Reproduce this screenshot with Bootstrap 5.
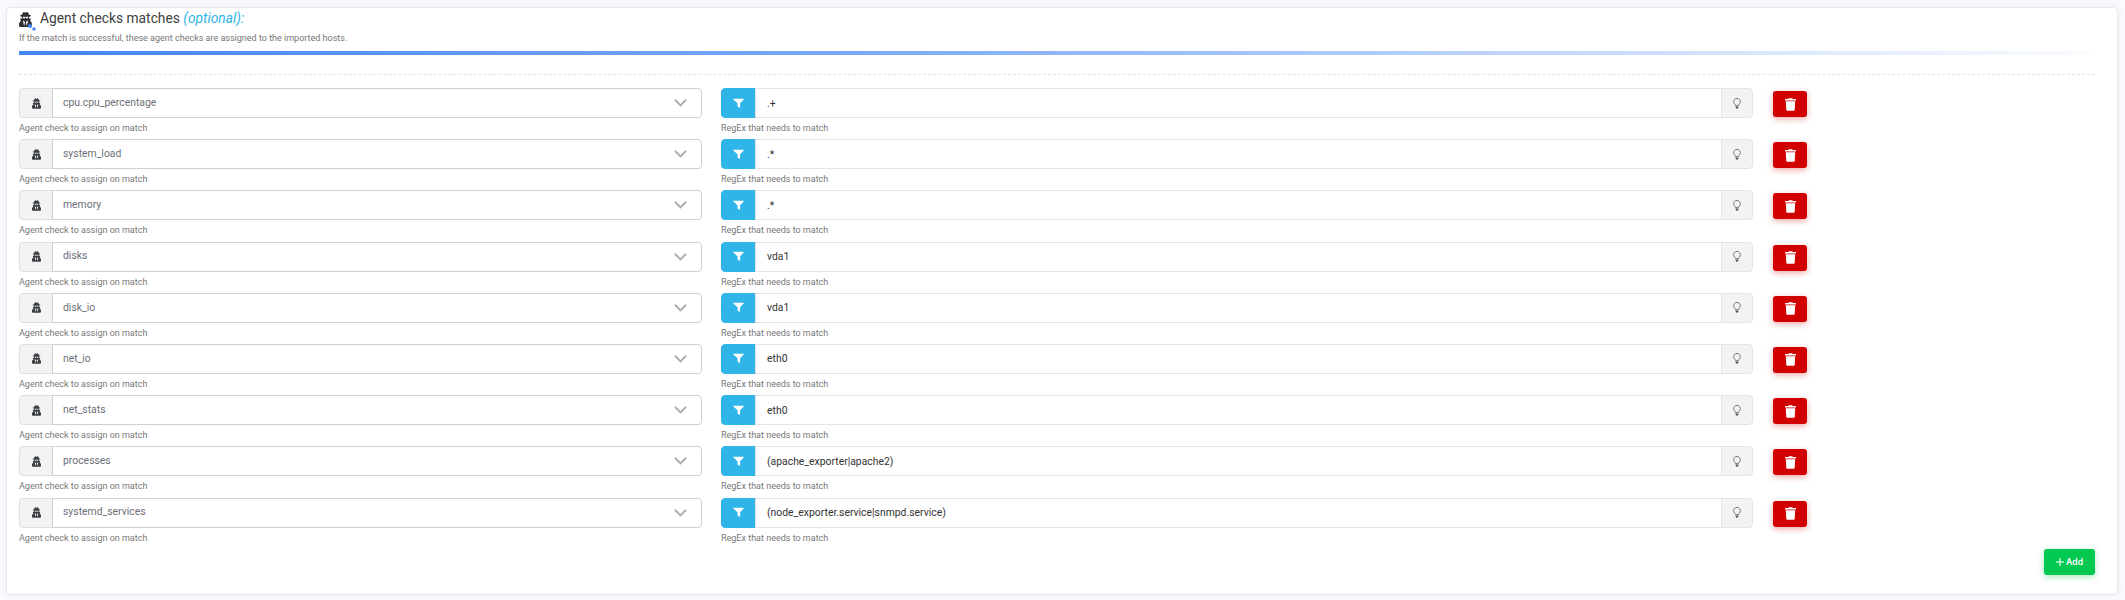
<!DOCTYPE html>
<html lang="en">
<head>
    <meta charset="UTF-8">
    <meta name="viewport" content="width=device-width, initial-scale=1.0">
    <title>Agent checks matches</title>
    <link href="https://cdn.jsdelivr.net/npm/bootstrap@5.3.3/dist/css/bootstrap.min.css" rel="stylesheet">
    <style>
        body { background: #fafbfe; font-family: Roboto, "Liberation Sans", sans-serif; font-size: 10.4px; color: #4d4d4f; }
        .page-wrap { padding: 7px 7px 5px 6px; }
        .main-card { height: 588px; border: 1px solid #e6e8ee; border-radius: 5px; box-shadow: 0 0 10px rgba(90, 100, 130, .10); padding: 0 12px; position: relative; }
        .title-row { height: 22px; }
        .title-icon { position: relative; width: 14px; height: 15px; margin-right: 7px; }
        .title-icon svg { display: block; }
        .title-text { font-size: 13.8px; line-height: 1; color: #404040; }
        .title-text em { color: #2fb5e8; }
        .title-sub { font-size: 9px; color: #777; line-height: 14px; margin-top: 1px; }
        .grad-bar { height: 4px; margin-top: 6px; margin-right: 10px; background: linear-gradient(to right, #4285f4 0%, #7aa9f7 40%, #fbfcff 100%); }
        .dash-line { border-top: 1px dashed #e3e3e3; margin: 19px 10px 13px 0; }
        .match-row { height: 51.2px; }
        .col-check { width: 683px; margin-right: 19px; }
        .col-regex { width: 1032px; margin-right: 20px; }
        .match-row .input-group-text { width: 34px; padding: 0; justify-content: center; background: #f3f3f3; border-color: #e0e0e0; border-radius: 4px 0 0 4px; }
        .match-row .form-select, .match-row .form-control { height: 30px; min-height: 0; font-size: 10.4px; line-height: 1.2; box-shadow: none; }
        .match-row .form-select { padding: 0 30px 0 10px; color: #6c7077; border: 1px solid #ccd0d6; border-radius: 4px; background-size: 13px 8px; background-position: right 14px center; background-image: url("data:image/svg+xml,%3csvg xmlns='http://www.w3.org/2000/svg' viewBox='0 0 16 10'%3e%3cpath fill='none' stroke='%23a9aeb5' stroke-width='2.4' d='M1 1l7 7 7-7'/%3e%3c/svg%3e"); }
        .match-row .form-control { padding: 0 11px; color: #333; border-color: #e4e4e4; }
        .match-row .filter-addon { width: 35px; background: #2fb5e8; border-color: #2fb5e8; }
        .match-row .bulb-addon { width: 32px; border-radius: 0 4px 4px 0; border-color: #e4e4e4; }
        .hint-text { font-size: 9px; line-height: 14px; color: #777; margin-top: 3px; }
        .del-btn { width: 34px; height: 26px; padding: 0; margin-top: 3px; background: #d10000; border: 0; border-radius: 3px; box-shadow: 0 2px 6px rgba(209, 0, 0, .35); }
        .add-btn { position: absolute; right: 22px; bottom: 19px; width: 51px; height: 26px; padding: 0; background: #00c851; border: 0; border-radius: 3px; color: #fff; font-size: 9.5px; font-weight: 500; box-shadow: 0 2px 6px rgba(0, 200, 81, .35); }
        .add-plus { margin-right: 2px; }
    </style>
</head>
<body>
    <svg width="0" height="0" class="d-block" style="position:absolute">
        <symbol id="ico-agent" viewBox="0 0 448 512"><path d="M383.9 308.3l23.9-62.6c4-10.5-3.7-21.7-15-21.7h-58.5c11-18.9 17.8-40.6 17.8-64v-.3c39.2-7.8 64-19.1 64-31.7 0-13.3-27.3-25.1-70.1-33-9.2-32.8-27-65.8-40.6-82.8-9.5-11.9-25.9-15.6-39.5-8.8l-27.6 13.8c-9 4.5-19.6 4.5-28.6 0L182.1 3.4c-13.6-6.8-30-3.1-39.5 8.8-13.5 17-31.4 50-40.6 82.8-42.7 7.9-70 19.7-70 33 0 12.6 24.8 23.9 64 31.7v.3c0 23.4 6.8 45.1 17.8 64H56.3c-11.5 0-19.2 11.7-14.7 22.3l25.8 60.2C27.3 329.8 0 372.7 0 422.4v44.8C0 491.9 20.1 512 44.8 512h358.4c24.7 0 44.8-20.1 44.8-44.8v-44.8c0-48.4-25.8-90.4-64.1-114.1zM176 480l-41.6-192 49.6 32 24 40-32 120zm96 0l-32-120 24-40 49.6-32L272 480zm41.7-298.5c-3.9 11.9-7 24.6-16.5 33.4-10.1 9.3-48 22.4-64-25-2.8-8.4-15.4-8.4-18.3 0-17 50.2-56 32.4-64 25-9.5-8.8-12.7-21.5-16.5-33.4-.8-2.5-6.3-5.7-6.3-5.8v-10.8c28.3 3.6 61 5.8 96 5.8s67.7-2.2 96-5.8v10.8c-.1.1-5.6 3.2-6.4 5.8z"/></symbol>
        <symbol id="ico-filter" viewBox="0 0 512 512"><path d="M30 40h452c18 0 27 21 14 34L330 240v200c0 15-17 24-30 15l-80-56c-6-4-9-9-9-15V240L16 74C3 61 12 40 30 40z"/></symbol>
        <symbol id="ico-bulb" viewBox="0 0 352 512"><path fill="none" stroke="currentColor" stroke-width="36" d="M176 20C88 20 20 92 20 172c0 38 14 72 37 98 16 18 44 55 53 86h132c9-31 37-68 53-86 23-26 37-60 37-98 0-80-68-152-156-152z"/><path fill="currentColor" d="M112 392h128v36l-32 60c-5 9-13 14-24 14h-16c-11 0-19-5-24-14l-32-60z"/></symbol>
        <symbol id="ico-trash" viewBox="0 0 448 512"><path d="M432 32H312l-9-19C299 5 291 0 282 0H166c-9 0-17 5-21 13l-9 19H16C7 32 0 39 0 48v32c0 9 7 16 16 16h416c9 0 16-7 16-16V48c0-9-7-16-16-16zM53 467c2 25 23 45 48 45h246c25 0 46-20 48-45l21-339H32z"/></symbol>
    </svg>

    <div class="page-wrap">
        <div class="card main-card">
            <div class="d-flex align-items-center title-row">
                <span class="title-icon">
                    <svg width="13" height="15"><use href="#ico-agent" fill="#2f3136"/></svg>
                    <svg class="position-absolute" style="left:8px;top:11px" width="10" height="9" viewBox="0 0 10 9"><circle cx="3" cy="3" r="2" fill="#4285f4"/><circle cx="7" cy="6" r="1.7" fill="#4285f4"/></svg>
                </span>
                <span class="title-text">Agent checks matches <em>(optional):</em></span>
            </div>
            <div class="title-sub">If the match is successful, these agent checks are assigned to the imported hosts.</div>
            <div class="grad-bar"></div>
            <div class="dash-line"></div>
            <div id="matchRows"></div>
            <button type="button" class="btn add-btn"><svg width="8" height="8" viewBox="0 0 8 8" class="add-plus"><path fill="none" stroke="#fff" stroke-width="1.1" d="M4 0v8M0 4h8"/></svg>Add</button>
        </div>
    </div>

    <script src="https://cdn.jsdelivr.net/npm/bootstrap@5.3.3/dist/js/bootstrap.bundle.min.js"></script>
    <script>
        const matches = [
            ['cpu.cpu_percentage', '.+'],
            ['system_load', '.*'],
            ['memory', '.*'],
            ['disks', 'vda1'],
            ['disk_io', 'vda1'],
            ['net_io', 'eth0'],
            ['net_stats', 'eth0'],
            ['processes', '(apache_exporter|apache2)'],
            ['systemd_services', '(node_exporter.service|snmpd.service)']
        ];

        document.getElementById('matchRows').innerHTML = matches.map(([check, regex]) => `
            <div class="d-flex match-row">
                <div class="col-check">
                    <div class="input-group">
                        <span class="input-group-text"><svg width="9" height="11" fill="#3a3d42"><use href="#ico-agent"/></svg></span>
                        <select class="form-select"><option>${check}</option></select>
                    </div>
                    <div class="hint-text">Agent check to assign on match</div>
                </div>
                <div class="col-regex">
                    <div class="input-group">
                        <span class="input-group-text filter-addon"><svg width="11" height="11" fill="#fff"><use href="#ico-filter"/></svg></span>
                        <input type="text" class="form-control" value="${regex}">
                        <span class="input-group-text bulb-addon"><svg width="8" height="11" color="#555"><use href="#ico-bulb"/></svg></span>
                    </div>
                    <div class="hint-text">RegEx that needs to match</div>
                </div>
                <button type="button" class="btn del-btn"><svg width="11" height="13" fill="#fff" class="d-block mx-auto"><use href="#ico-trash"/></svg></button>
            </div>`).join('');
    </script>
</body>
</html>
